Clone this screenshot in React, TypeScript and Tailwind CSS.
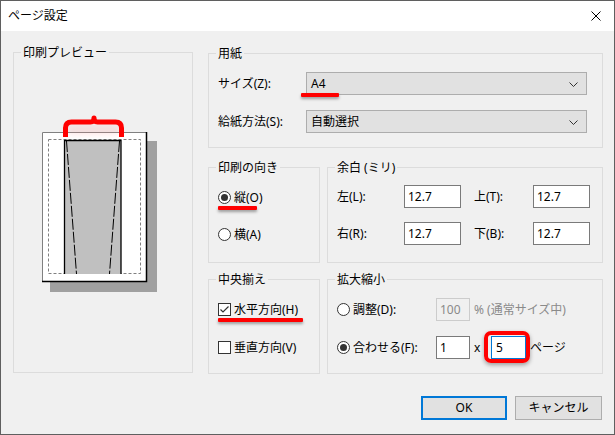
import React from "react";

const Legend = ({ children }: { children: React.ReactNode }) => (
  <legend className="ml-[7px] px-[2px] text-[12px] leading-[15px] text-black">{children}</legend>
);

const Chevron = () => (
  <svg width="9" height="5" viewBox="0 0 9 5" className="absolute right-[8px] top-[9px]">
    <path d="M0.5 0.5 L4.5 4.5 L8.5 0.5" fill="none" stroke="#333" strokeWidth="1" />
  </svg>
);

const Radio = ({ checked }: { checked?: boolean }) => (
  <div className="w-[13px] h-[13px] rounded-full border border-[#333] bg-white flex items-center justify-center shrink-0">
    {checked && <div className="w-[7px] h-[7px] rounded-full bg-[#333]" />}
  </div>
);

const Check = ({ checked }: { checked?: boolean }) => (
  <div className="w-[13px] h-[13px] border border-[#333] bg-white shrink-0 flex items-center justify-center">
    {checked && (
      <svg width="11" height="11" viewBox="0 0 11 11">
        <path d="M1.5 5.5 L4 8 L9.5 2.5" fill="none" stroke="#333" strokeWidth="1.2" />
      </svg>
    )}
  </div>
);

const TextBox = ({ value, w }: { value: string; w: string }) => (
  <div className={`${w} h-[23px] border border-[#7a7a7a] bg-white flex items-center pl-[3px] text-[12px] text-black`}>
    {value}
  </div>
);

const RedLine = ({ cls }: { cls: string }) => (
  <div className={`absolute h-[4px] bg-[#ff0000] rounded-[1px] shadow-[0_2px_3px_rgba(0,0,0,0.35)] ${cls}`} />
);

export default function App() {
  return (
    <div className="w-[615px] h-[435px] border border-[#5f5f5f] flex flex-col font-['Noto_Sans','Noto_Sans_CJK_JP',sans-serif] text-[12px] text-black overflow-hidden">
      <div className="h-[30px] bg-white flex items-center justify-between pl-[7px] pr-[13px] shrink-0">
        <span className="text-[12px] leading-none">ページ設定</span>
        <svg width="10" height="10" viewBox="0 0 10 10">
          <path d="M0.5 0.5 L9.5 9.5 M9.5 0.5 L0.5 9.5" stroke="#000" strokeWidth="1" />
        </svg>
      </div>
      <div className="flex-1 bg-[#f0f0f0] flex flex-col">
        <div className="flex pl-[12px] pt-[14px]">
          <fieldset className="w-[180px] h-[328px] border border-[#dcdcdc] shrink-0">
            <Legend>印刷プレビュー</Legend>
            <svg width="130" height="185" viewBox="0 0 130 185" className="ml-[26px] mt-[55px]">
              <defs>
                <filter id="blur" x="-20%" y="-30%" width="140%" height="160%">
                  <feGaussianBlur stdDeviation="3" />
                </filter>
              </defs>
              <rect x="10" y="26" width="107" height="151" fill="#a0a0a0" />
              <rect x="2" y="17" width="105" height="150" fill="#ffffff" />
              <path d="M2.5 166.5 V17.5 H106.5" fill="none" stroke="#808080" strokeWidth="1" />
              <path d="M106.5 17 V166.5 H2" fill="none" stroke="#000" strokeWidth="1.5" />
              <rect x="8.5" y="24.5" width="92" height="134" fill="none" stroke="#808080" strokeWidth="1" strokeDasharray="3 2" />
              <rect x="24" y="25" width="57" height="134" fill="#c0c0c0" />
              <path d="M24.5 159 V25.5 H81 V159" fill="none" stroke="#000" strokeWidth="1.3" />
              <path d="M26.5 26 L36.5 159" fill="none" stroke="#000" strokeWidth="1" strokeDasharray="11 2" />
              <path d="M79.5 26 L69.5 159" fill="none" stroke="#000" strokeWidth="1" strokeDasharray="11 2" />
              <rect x="28" y="10" width="52" height="10" fill="#ff9090" opacity="0.2" filter="url(#blur)" />
              <path
                d="M25.5 22 V13 Q25.5 7 31.5 7 H50.5 Q54 7 54 3 Q54 7 57.5 7 H75.5 Q81.5 7 81.5 13 V22"
                fill="none"
                stroke="#ff0000"
                strokeWidth="5"
                strokeLinejoin="round"
              />
            </svg>
          </fieldset>
          <div className="ml-[15px] pt-[1px] flex flex-col">
            <fieldset className="w-[395px] h-[102px] border border-[#dcdcdc]">
              <Legend>用紙</Legend>
              <div className="pl-[9px] pt-[11px] flex flex-col gap-[15px]">
                <div className="flex items-center h-[23px]">
                  <span className="w-[88px]">サイズ(Z):</span>
                  <div className="relative w-[281px] h-[23px] bg-[#e1e1e1] border border-[#adadad] flex items-center pl-[4px]">
                    A4
                    <Chevron />
                    <RedLine cls="left-[-6px] top-[20px] w-[38px]" />
                  </div>
                </div>
                <div className="flex items-center h-[23px]">
                  <span className="w-[88px]">給紙方法(S):</span>
                  <div className="relative w-[281px] h-[23px] bg-[#e1e1e1] border border-[#adadad] flex items-center pl-[4px]">
                    自動選択
                    <Chevron />
                  </div>
                </div>
              </div>
            </fieldset>
            <div className="flex gap-[7px] mt-[12px]">
              <fieldset className="w-[112px] h-[103px] border border-[#dcdcdc]">
                <Legend>印刷の向き</Legend>
                <div className="pl-[9px] pt-[16px] flex flex-col gap-[24px]">
                  <div className="relative flex items-center h-[13px] gap-[3px]">
                    <Radio checked />
                    <span>縦(O)</span>
                    <RedLine cls="left-0 top-[15px] w-[39px]" />
                  </div>
                  <div className="flex items-center h-[13px] gap-[3px]">
                    <Radio />
                    <span>横(A)</span>
                  </div>
                </div>
              </fieldset>
              <fieldset className="w-[276px] h-[103px] border border-[#dcdcdc]">
                <Legend>余白 (ミリ)</Legend>
                <div className="pl-[9px] pt-[10px] flex flex-col gap-[14px]">
                  <div className="flex items-center">
                    <span className="w-[67px]">左(L):</span>
                    <TextBox value="12.7" w="w-[57px]" />
                    <span className="w-[59px] ml-[13px]">上(T):</span>
                    <TextBox value="12.7" w="w-[57px]" />
                  </div>
                  <div className="flex items-center">
                    <span className="w-[67px]">右(R):</span>
                    <TextBox value="12.7" w="w-[57px]" />
                    <span className="w-[59px] ml-[13px]">下(B):</span>
                    <TextBox value="12.7" w="w-[57px]" />
                  </div>
                </div>
              </fieldset>
            </div>
            <div className="flex gap-[7px] mt-[9px]">
              <fieldset className="w-[112px] h-[102px] border border-[#dcdcdc]">
                <Legend>中央揃え</Legend>
                <div className="pl-[9px] pt-[16px] flex flex-col gap-[25px]">
                  <div className="relative flex items-center h-[13px] gap-[3px]">
                    <Check checked />
                    <span>水平方向(H)</span>
                    <RedLine cls="left-0 top-[15px] w-[85px]" />
                  </div>
                  <div className="flex items-center h-[13px] gap-[3px]">
                    <Check />
                    <span>垂直方向(V)</span>
                  </div>
                </div>
              </fieldset>
              <fieldset className="w-[276px] h-[102px] border border-[#dcdcdc]">
                <Legend>拡大縮小</Legend>
                <div className="pl-[9px] pt-[11px] flex flex-col gap-[15px]">
                  <div className="flex items-center h-[23px]">
                    <div className="w-[99px] flex items-center gap-[3px]">
                      <Radio />
                      <span>調整(D):</span>
                    </div>
                    <div className="w-[34px] h-[23px] border border-[#cccccc] bg-[#f0f0f0] flex items-center pl-[3px] text-[#8a8a8a]">
                      100
                    </div>
                    <span className="ml-[4px] text-[#8a8a8a]">% (通常サイズ中)</span>
                  </div>
                  <div className="flex items-center h-[23px]">
                    <div className="w-[99px] flex items-center gap-[3px]">
                      <Radio checked />
                      <span>合わせる(F):</span>
                    </div>
                    <TextBox value="1" w="w-[34px]" />
                    <span className="ml-[4px] w-[17px]">x</span>
                    <div className="relative">
                      <div className="w-[35px] h-[23px] border border-[#0078d7] bg-white flex items-center pl-[4px]">5</div>
                      <div className="absolute left-[-7px] top-[-5px] w-[46px] h-[32px] border-[4px] border-[#ff0000] rounded-[7px] shadow-[0_2px_4px_rgba(0,0,0,0.35)]" />
                    </div>
                    <span className="ml-[4px]">ページ</span>
                  </div>
                </div>
              </fieldset>
            </div>
          </div>
        </div>
        <div className="flex justify-end gap-[8px] pr-[12px] mt-[22px]">
          <button className="w-[86px] h-[24px] bg-[#e1e1e1] border-2 border-[#0078d7] text-[12px] flex items-center justify-center">
            OK
          </button>
          <button className="w-[87px] h-[24px] bg-[#e1e1e1] border border-[#adadad] text-[12px] flex items-center justify-center">
            キャンセル
          </button>
        </div>
      </div>
    </div>
  );
}
